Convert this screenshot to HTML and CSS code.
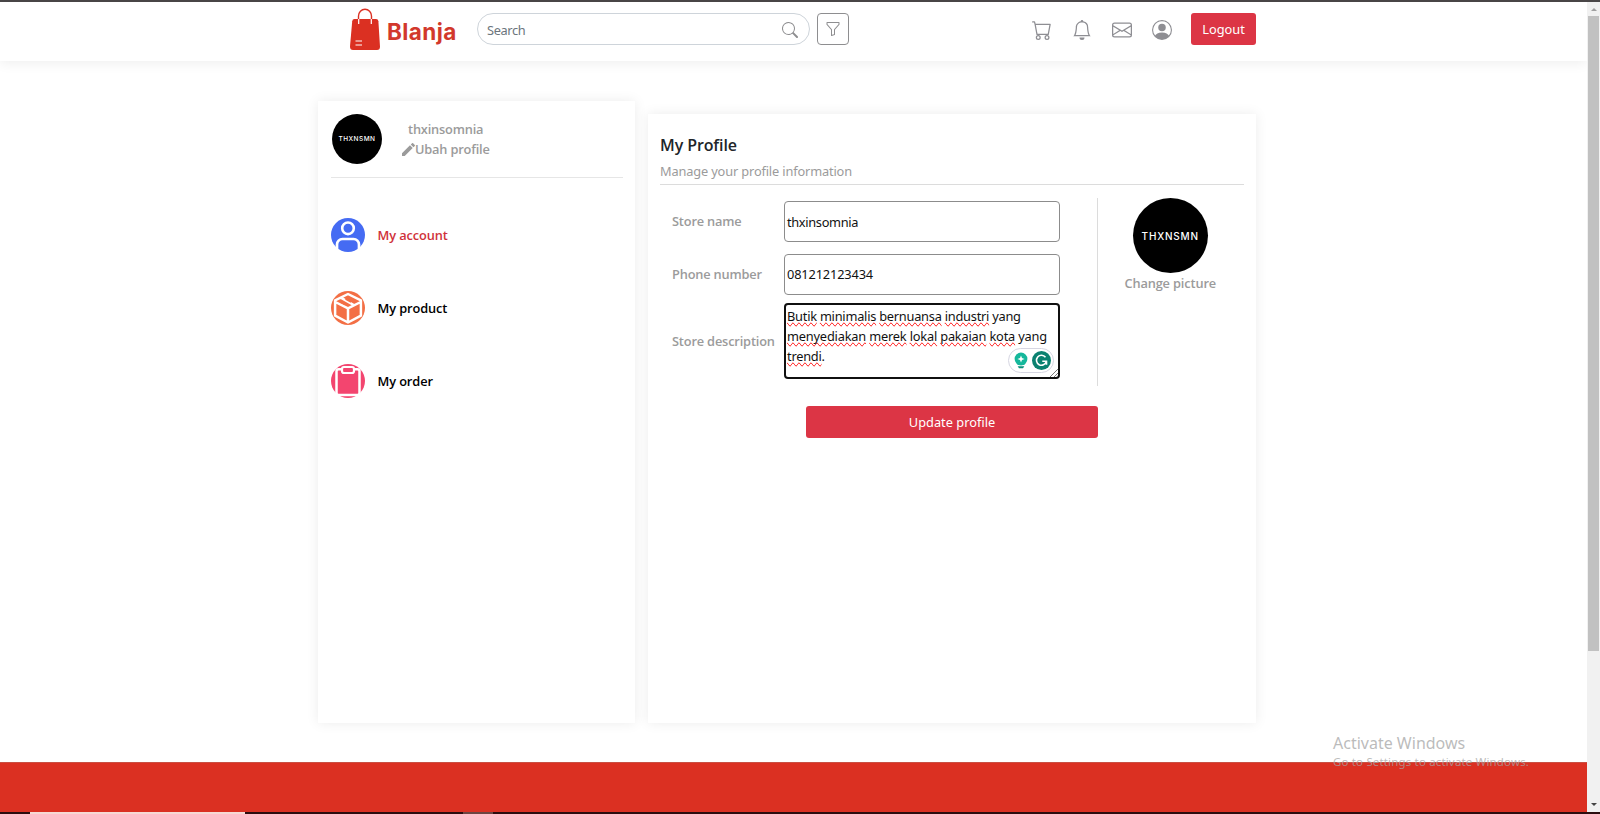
FILE: index.html
```html
<!DOCTYPE html>
<html lang="en">
<head>
<meta charset="utf-8">
<title>Blanja - My Profile</title>
<link rel="stylesheet" href="styles.css">
</head>
<body>
<div class="window">
<div class="page">
  <header class="navbar">
    <a class="brand">
      <svg class="brand-bag" viewBox="0 0 30 42"><path d="M8.5 16V8a6.5 6.8 0 0 1 13 0v8" fill="none" stroke="#db3022" stroke-width="1.4"/><path d="M4.5 11H26a2.500 2.500 0 0 1 2.400 2.200L30 38.500Q30 42 27 42H3Q0 42 0 38.500L2.200 13.200A2.500 2.500 0 0 1 4.500 11z" fill="#db3022"/><path d="M8.700 11v5M21.300 11v5" stroke="#fff" stroke-width="1.200"/><path d="M5.500 33H12M5.500 37H12" stroke="#fff" stroke-width="1.200"/></svg>
      <span class="brand-name">Blanja</span>
    </a>
    <div class="search"><span>Search</span>
      <svg class="icon16" viewBox="0 0 16 16"><path d="M11.742 10.344a6.500 6.500 0 1 0-1.397 1.398h-.001c.03.04.062.078.098.115l3.850 3.850a1 1 0 0 0 1.415-1.414l-3.850-3.850a1.007 1.007 0 0 0-.115-.1zM12 6.500a5.500 5.500 0 1 1-11 0 5.500 5.500 0 0 1 11 0z"/></svg>
    </div>
    <button class="filter"><svg class="icon16" viewBox="0 0 16 16"><path d="M1.500 1.500A.5.5 0 0 1 2 1h12a.5.5 0 0 1 .5.5v2a.5.5 0 0 1-.128.334L10 8.692V13.500a.5.5 0 0 1-.342.474l-3 1A.5.5 0 0 1 6 14.500V8.692L1.628 3.834A.5.5 0 0 1 1.500 3.500v-2zm1 .5v1.308l4.372 4.858A.5.5 0 0 1 7 8.500v5.306l2-.666V8.500a.5.5 0 0 1 .128-.334L13.500 3.308V2h-11z"/></svg></button>
    <nav class="nav-icons">
      <svg viewBox="0 0 16 16"><path d="M0 1.500A.5.5 0 0 1 .5 1H2a.5.5 0 0 1 .485.379L2.890 3H14.500a.5.5 0 0 1 .491.592l-1.500 8A.5.5 0 0 1 13 12H4a.5.5 0 0 1-.491-.408L2.010 3.607 1.610 2H.5a.5.5 0 0 1-.5-.5zM3.102 4l1.313 7h8.170l1.313-7H3.102zM5 12a2 2 0 1 0 0 4 2 2 0 0 0 0-4zm7 0a2 2 0 1 0 0 4 2 2 0 0 0 0-4zm-7 1a1 1 0 1 1 0 2 1 1 0 0 1 0-2zm7 0a1 1 0 1 1 0 2 1 1 0 0 1 0-2z"/></svg>
      <svg viewBox="0 0 16 16"><path d="M8 16a2 2 0 0 0 2-2H6a2 2 0 0 0 2 2zM8 1.918l-.797.161A4.002 4.002 0 0 0 4 6c0 .628-.134 2.197-.459 3.742-.16.767-.376 1.566-.663 2.258h10.244c-.287-.692-.502-1.490-.663-2.258C12.134 8.197 12 6.628 12 6a4.002 4.002 0 0 0-3.203-3.920L8 1.917zM14.220 12c.223.447.481.801.78 1H1c.299-.199.557-.553.78-1C2.680 10.200 3 6.880 3 6c0-2.420 1.720-4.440 4.005-4.901a1 1 0 1 1 1.990 0A5.002 5.002 0 0 1 13 6c0 .88.320 4.200 1.220 6z"/></svg>
      <svg viewBox="0 0 16 16"><path d="M0 4a2 2 0 0 1 2-2h12a2 2 0 0 1 2 2v8a2 2 0 0 1-2 2H2a2 2 0 0 1-2-2V4Zm2-1a1 1 0 0 0-1 1v.217l7 4.200 7-4.200V4a1 1 0 0 0-1-1H2Zm13 2.383-4.708 2.825L15 11.105V5.383Zm-.034 6.876-5.640-3.471L8 9.583l-1.326-.795-5.640 3.470A1 1 0 0 0 2 13h12a1 1 0 0 0 .966-.741ZM1 11.105l4.708-2.897L1 5.383v5.722Z"/></svg>
      <svg viewBox="0 0 16 16"><path d="M11 6a3 3 0 1 1-6 0 3 3 0 0 1 6 0z"/><path fill-rule="evenodd" d="M0 8a8 8 0 1 1 16 0A8 8 0 0 1 0 8zm8-7a7 7 0 0 0-5.468 11.370C3.242 11.226 4.805 10 8 10s4.757 1.225 5.468 2.370A7 7 0 0 0 8 1z"/></svg>
    </nav>
    <button class="btn logout">Logout</button>
  </header>

  <main class="content">
    <aside class="sidebar">
      <div class="user">
        <div class="avatar">THXNSMN</div>
        <div class="user-info">
          <div class="user-name">thxinsomnia</div>
          <div class="user-edit"><svg viewBox="3 3 18 18"><path d="M3 17.250V21h3.750L17.810 9.940l-3.750-3.750L3 17.250zM20.710 7.040a1 1 0 0 0 0-1.410l-2.340-2.340a1 1 0 0 0-1.410 0l-1.830 1.830 3.750 3.750 1.830-1.830z"/></svg><span>Ubah profile</span></div>
        </div>
      </div>
      <ul class="menu">
        <li class="active"><svg viewBox="0 0 34 34"><circle cx="17" cy="17" r="17" fill="#456bf3"/><circle cx="17" cy="10.300" r="5.800" fill="none" stroke="#fff" stroke-width="2.600"/><path d="M6 31v-4.500a5.500 5.500 0 0 1 5.500-5.500h11a5.500 5.500 0 0 1 5.500 5.500V31" fill="none" stroke="#fff" stroke-width="2.700"/></svg><span>My account</span></li>
        <li><svg viewBox="0 0 34 34"><circle cx="17" cy="17" r="17" fill="#f36f45"/><path d="M17 3 29.900 9.400v15.200L17 31.500 4.100 24.600V9.400z M4.300 11 17 17.300 29.700 11M17 17.300v14M10.200 6.800l12.500 7.200" fill="none" stroke="#fff" stroke-width="2.500" stroke-linejoin="round"/><path d="M14.500 8l5.500 3.100M9.500 11l5 2.700" fill="none" stroke="#f36f45" stroke-width="1.500"/></svg><span>My product</span></li>
        <li><svg viewBox="0 0 34 34"><circle cx="17" cy="17" r="17" fill="#f3456f"/><path d="M10.500 5.300H7.500a2 2 0 0 0-2 2V29a2 2 0 0 0 2 2h19a2 2 0 0 0 2-2V7.300a2 2 0 0 0-2-2h-3" fill="none" stroke="#fff" stroke-width="2.500"/><rect x="11" y="3" width="12" height="6" rx="2" fill="none" stroke="#fff" stroke-width="2.200"/></svg><span>My order</span></li>
      </ul>
    </aside>

    <section class="panel">
      <h1 class="panel-title">My Profile</h1>
      <p class="panel-sub">Manage your profile information</p>
      <div class="panel-body">
        <form class="fields">
          <label>Store name</label>
          <div class="field name">thxinsomnia</div>
          <label>Phone number</label>
          <div class="field phone">081212123434</div>
          <label class="area-label">Store description</label>
          <div class="field area">
            <div class="line"><u>Butik</u> <u>minimalis</u> <u>bernuansa</u> <u>industri</u> yang</div>
            <div class="line wide"><u>menyediakan</u> <u>merek</u> <u>lokal</u> <u>pakaian</u> <u>kota</u> yang</div>
            <div class="line"><u>trendi</u>.</div>
            <div class="helper">
              <svg class="bulb" viewBox="0 0 14 17"><circle cx="7" cy="7" r="6.400" fill="#15b79b"/><path d="M3.500 11h7v2h-7z" fill="#15b79b"/><path d="M3.700 14.300h6.600l-1.300 1.900H5z" fill="#0b8f7a"/><path d="M7 3.400 8 6l2.600 1L8 8 7 10.600 6 8 3.400 7 6 6z" fill="#fff"/></svg>
              <svg class="gmark" viewBox="0 0 19 19"><circle cx="9.500" cy="9.500" r="9.500" fill="#0b8170"/><path d="M13.500 6.300A5 5 0 1 0 14.300 10.500M10.300 10.300h4.200v3.400" fill="none" stroke="#fff" stroke-width="1.600"/></svg>
            </div>
            <svg class="grip" viewBox="0 0 8 8"><path d="M0 8 8 0M4 8 8 4" stroke="#777" fill="none"/></svg>
          </div>
        </form>
        <div class="picture">
          <div class="avatar large">THXNSMN</div>
          <span class="change">Change picture</span>
        </div>
      </div>
      <button class="btn update">Update profile</button>
    </section>
  </main>
  <footer class="footer"></footer>
</div>
<div class="scrollbar"><i class="arrow up"></i><div class="thumb"></div><i class="arrow down"></i></div>
</div>
<div class="taskbar"><i class="task-open"></i><i class="task-item"></i></div>
<div class="watermark"><div class="wm-title">Activate Windows</div><div class="wm-text">Go to Settings to activate Windows.</div></div>
</body>
</html>
```
FILE: styles.css
```css
* { box-sizing: border-box; }
body {
  margin: 0;
  height: 814px;
  overflow: hidden;
  display: flex;
  flex-direction: column;
  font: 12.8px/20px "Noto Sans", "Open Sans", sans-serif;
  color: #212529;
  background: #fff;
}
ul, h1, p { margin: 0; padding: 0; list-style: none; }
button { font: inherit; padding: 0; }
.window { height: 812px; display: flex; border-top: 2px solid #4a4748; flex: none; }
.page { width: 1587px; display: flex; flex-direction: column; }

.navbar {
  height: 59px;
  flex: none;
  display: flex;
  align-items: flex-start;
  padding: 11px 0 0 350px;
  box-shadow: 0 2px 12px rgba(0, 0, 0, .07);
}
.brand { display: flex; width: 127px; margin-top: -5px; }
.brand-bag { width: 30px; height: 42px; }
.brand-name { margin: 10px 0 0 7px; font: 700 22.5px/28px "Inter", sans-serif; letter-spacing: .4px; color: #d2382c; }
.search {
  width: 333px;
  height: 32px;
  border: 1px solid #ced4da;
  border-radius: 16px;
  display: flex;
  align-items: center;
  justify-content: space-between;
  padding: 1px 11px 0 9px;
  color: #6c757d;
  letter-spacing: -.35px;
}
.icon16 { width: 16px; height: 16px; fill: #8e8e90; display: block; }
.filter {
  width: 32px;
  height: 32px;
  margin-left: 7px;
  border: 1px solid #8e8e90;
  border-radius: 4px;
  background: #fff;
  display: grid;
  place-items: center;
}
.nav-icons { display: flex; gap: 20px; margin: 7px 0 0 182.5px; }
.nav-icons svg { width: 20px; height: 20px; fill: #8e8e93; }
.btn {
  height: 32px;
  border: 0;
  border-radius: 3px;
  background: #dc3545;
  color: #fff;
  display: flex;
  align-items: center;
  justify-content: center;
}
.logout { width: 65px; margin-left: 19.5px; }

.content { display: flex; align-items: flex-end; gap: 13px; margin: 40px 0 39px 318px; height: 622px; }
.sidebar, .panel { background: #fff; box-shadow: 0 0 12px rgba(0, 0, 0, .08); }
.sidebar { width: 317px; height: 622px; padding: 13px 12px 0 13px; }
.user { display: flex; height: 64px; border-bottom: 1px solid #e6e6e6; color: #9b9b9b; font-weight: 600; }
.avatar {
  width: 50px;
  height: 50px;
  margin-left: 1px;
  border-radius: 50%;
  background: #000;
  color: #fff;
  display: grid;
  place-items: center;
  font: 500 6.5px/8px "Inter", sans-serif;
  letter-spacing: .5px;
}
.user-info { margin: 5px 0 0 20px; font-family: "Open Sans", sans-serif; letter-spacing: -.18px; }
.user-name { padding-left: 6px; }
.user-edit { display: flex; align-items: center; }
.user-edit svg { width: 13px; height: 13px; fill: #9b9b9b; }
.menu { padding-top: 39.5px; display: flex; flex-direction: column; gap: 39.25px; }
.menu li { display: flex; align-items: center; gap: 13px; color: #000; font: 600 12.8px/20px "Open Sans", sans-serif; letter-spacing: -.1px; }
.menu svg { width: 34px; height: 34px; margin-right: -.5px; }
.menu .active { color: #d0323a; }

.panel { width: 608px; height: 609px; padding: 21px 12px 0; }
.panel-title { font: 600 16px/20px "Open Sans", sans-serif; letter-spacing: -.1px; }
.panel-sub { margin-top: 6px; height: 24px; border-bottom: 1px solid #dcdcdc; color: #9b9b9b; letter-spacing: -.15px; }
.panel-body { display: flex; margin-top: 13px; }
.fields {
  width: 438px;
  height: 188px;
  border-right: 1px solid #dcdcdc;
  padding: 3px 0 0 12px;
  display: grid;
  grid-template-columns: 112px 276px;
  grid-template-rows: 41px 41px 76px;
  row-gap: 11.500px;
  align-items: center;
}
.fields label { margin-top: -1px; color: #9b9b9b; font-family: "Open Sans", sans-serif; font-weight: 600; letter-spacing: -.17px; }
.fields .area-label { margin-top: -7px; }
.field { height: 100%; border: 1px solid #8c8c8c; border-radius: 4px; color: #111; padding: 0 2px; display: flex; align-items: center; }
.name { letter-spacing: -.33px; }
.phone { letter-spacing: -.15px; }
.area { position: relative; border: 2px solid #101010; padding: 1px 1px; display: block; margin-top: -7px; letter-spacing: -.24px; }
.area u { text-decoration-line: spelling-error; }
.line { white-space: nowrap; }
.wide { letter-spacing: -.19px; }
.helper {
  position: absolute;
  right: 4px;
  bottom: 4px;
  width: 46px;
  height: 25px;
  border: 1px solid #d6d6e2;
  border-radius: 13px;
  background: #fff;
  display: flex;
  align-items: center;
  gap: 4px;
  padding-left: 5px;
}
.bulb { width: 14px; height: 17px; }
.gmark { width: 19px; height: 19px; }
.grip { position: absolute; right: 0; bottom: 0; width: 8px; height: 8px; }
.picture { flex: 1; display: flex; flex-direction: column; align-items: center; padding-right: 1.5px; }
.avatar.large { width: 75px; height: 75px; margin: 0; font-size: 10px; letter-spacing: .8px; }
.change { margin-top: -.5px; color: #9b9b9b; font-family: "Open Sans", sans-serif; font-weight: 600; letter-spacing: -.14px; }
.update { width: 292px; margin: 20px 0 0 146px; }

.footer { flex: 1; background: #db3022; border-top: 1px solid #c94f42; }
.scrollbar { width: 13px; background: #f1f1f1; display: flex; flex-direction: column; align-items: center; }
.arrow { border: 3px solid transparent; }
.up { border-bottom-color: #a0a0a0; margin: 3px 0 5px; }
.thumb { width: 11px; height: 635px; background: #c1c1c1; }
.down { border-top-color: #444; margin: auto 0 3px; }
.taskbar { height: 2px; background: #2c0d0f; display: flex; }
.task-open { width: 215px; margin-left: 30px; background: #f6d9d5; }
.task-item { width: 30px; margin-left: 218px; background: #6d4542; }
.watermark { position: absolute; left: 1333px; top: 732px; color: rgba(165, 165, 165, .75); white-space: nowrap; }
.wm-title { font-size: 16px; line-height: 22px; }
.wm-text { font-size: 11.500px; line-height: 16px; letter-spacing: .16px; }
```
